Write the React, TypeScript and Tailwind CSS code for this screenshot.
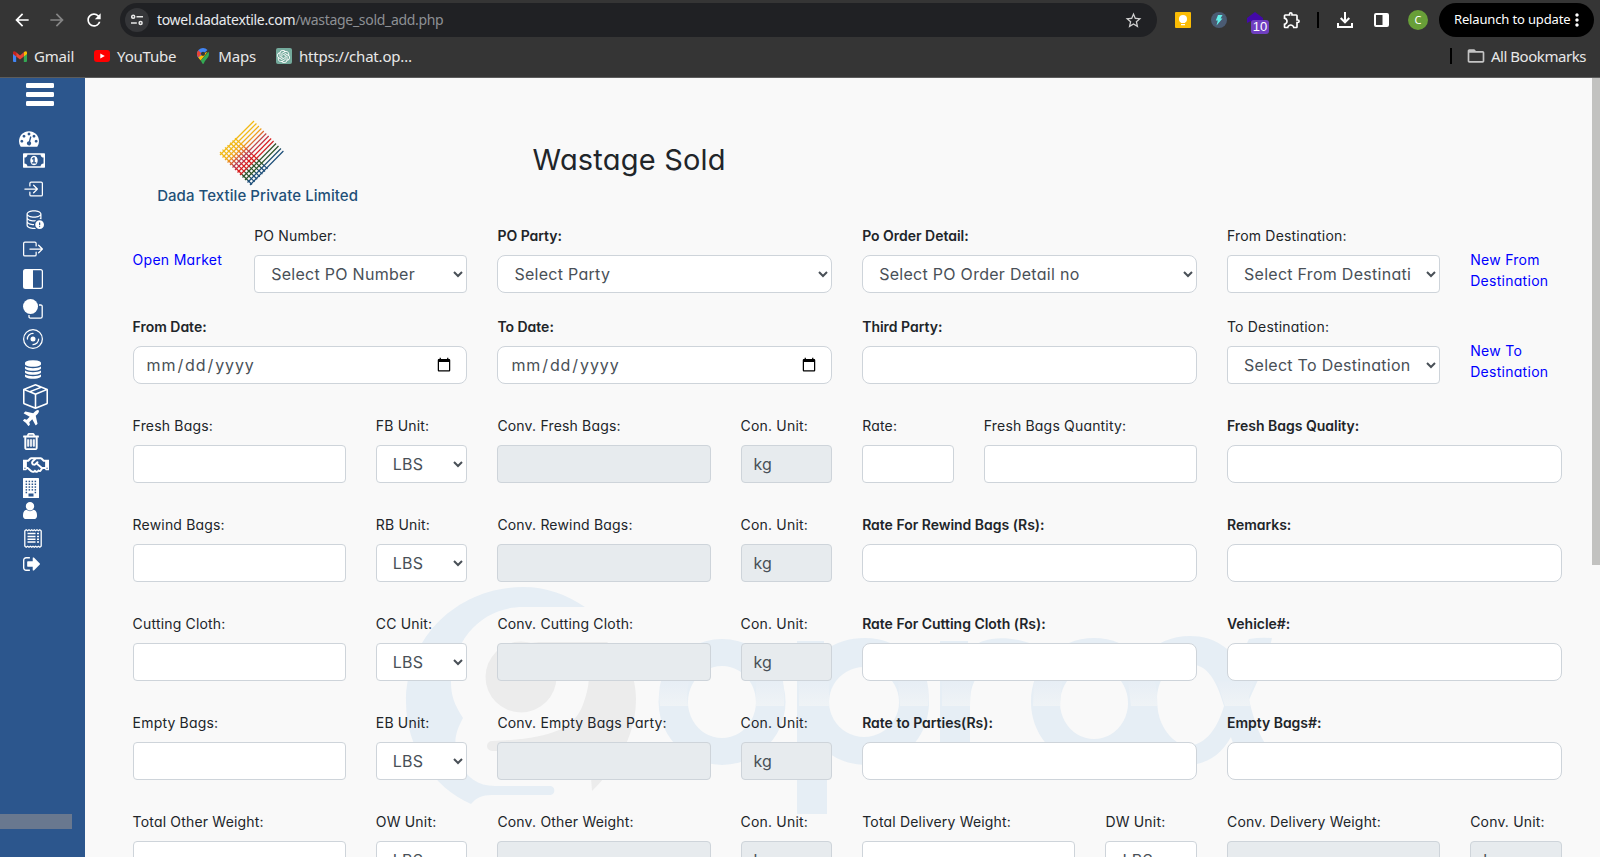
import React from "react";
import {
  MdArrowBack,
  MdArrowForward,
  MdRefresh,
  MdStarBorder,
  MdOutlineExtension,
  MdMoreVert,
  MdFolderOpen,
} from "react-icons/md";
import {
  BsBoxArrowInRight,
  BsBoxArrowRight,
  BsDatabaseExclamation,
  BsSquareHalf,
  BsDisc,
  BsBoxSeam,
} from "react-icons/bs";
import { FaRegHandshake } from "react-icons/fa";
import { SiOpenai } from "react-icons/si";

type Kind = "input" | "select" | "date" | "readonly" | "link";
interface Field {
  span: 1 | 2 | 3;
  label: string;
  kind: Kind;
  value?: string;
  bold?: boolean;
}

const SPAN = { 1: "col-span-1", 2: "col-span-2", 3: "col-span-3" } as const;

const input = (span: 1 | 2 | 3, label: string): Field => ({ span, label, kind: "input", bold: span === 3 });
const select = (span: 1 | 2 | 3, label: string, value: string): Field => ({
  span,
  label,
  kind: "select",
  value,
  bold: span === 3,
});
const date = (label: string): Field => ({ span: 3, label, kind: "date", bold: true });
const readonly = (span: 1 | 2 | 3, label: string, value = ""): Field => ({ span, label, kind: "readonly", value });
const link = (label: string): Field => ({ span: 1, label, kind: "link" });

const topRows: Field[][] = [
  [
    link("Open Market"),
    select(2, "PO Number:", "Select PO Number"),
    select(3, "PO Party:", "Select Party"),
    select(3, "Po Order Detail:", "Select PO Order Detail no"),
    select(2, "From Destination:", "Select From Destination"),
    link("New From Destination"),
  ],
  [
    date("From Date:"),
    date("To Date:"),
    input(3, "Third Party:"),
    select(2, "To Destination:", "Select To Destination"),
    link("New To Destination"),
  ],
];

const weightRow = (name: string, code: string, conv: string, rest: Field[]): Field[] => [
  input(2, name),
  select(1, code, "LBS"),
  readonly(2, conv),
  readonly(1, "Con. Unit:", "kg"),
  ...rest,
];

const weightRows: Field[][] = [
  weightRow("Fresh Bags:", "FB Unit:", "Conv. Fresh Bags:", [
    input(1, "Rate:"),
    input(2, "Fresh Bags Quantity:"),
    input(3, "Fresh Bags Quality:"),
  ]),
  weightRow("Rewind Bags:", "RB Unit:", "Conv. Rewind Bags:", [
    input(3, "Rate For Rewind Bags (Rs):"),
    input(3, "Remarks:"),
  ]),
  weightRow("Cutting Cloth:", "CC Unit:", "Conv. Cutting Cloth:", [
    input(3, "Rate For Cutting Cloth (Rs):"),
    input(3, "Vehicle#:"),
  ]),
  weightRow("Empty Bags:", "EB Unit:", "Conv. Empty Bags Party:", [
    input(3, "Rate to Parties(Rs):"),
    input(3, "Empty Bags#:"),
  ]),
  weightRow("Total Other Weight:", "OW Unit:", "Conv. Other Weight:", [
    input(2, "Total Delivery Weight:"),
    select(1, "DW Unit:", "LBS"),
    readonly(2, "Conv. Delivery Weight:"),
    readonly(1, "Conv. Unit:", "kg"),
  ]),
];

function FieldView({ field }: { field: Field }) {
  if (field.kind === "link") {
    return (
      <div className="col-span-1 pt-6">
        <a className="block w-[92px] text-sm leading-[21px] tracking-[0.28px] text-[#0000ff]">{field.label}</a>
      </div>
    );
  }
  const radius = field.span === 3 ? "rounded-lg" : "rounded";
  const box = `block h-[38px] w-full border border-[#ced4da] px-3 text-base text-[#495057] outline-none ${radius}`;
  return (
    <label className={`block min-w-0 ${SPAN[field.span]}`}>
      <span
        className={
          field.bold
            ? "mb-[9px] block h-[21px] whitespace-nowrap text-sm font-semibold leading-[21px] tracking-[-0.02px] text-[#212529]"
            : "mb-[9px] block h-[21px] whitespace-nowrap text-sm leading-[21px] tracking-[0.18px] text-[#212529]"
        }
      >
        {field.label}
      </span>
      {field.kind === "select" && (
        <select className={`${box} bg-white tracking-[0.28px]`}>
          <option>{field.value}</option>
        </select>
      )}
      {field.kind === "date" && <input type="date" className={`${box} bg-white tracking-[0.9px]`} />}
      {field.kind === "input" && <input type="text" className={`${box} bg-white`} />}
      {field.kind === "readonly" && (
        <input type="text" readOnly defaultValue={field.value} className={`${box} bg-[#e7ebee]`} />
      )}
    </label>
  );
}

function FormRow({ fields, height }: { fields: Field[]; height: string }) {
  return (
    <div className={`grid grid-cols-12 gap-x-[30px] ${height}`}>
      {fields.map((f, i) => (
        <FieldView key={i} field={f} />
      ))}
    </div>
  );
}

function Bookmark({ icon, text }: { icon: React.ReactNode; text: string }) {
  return (
    <div className="flex items-center gap-[7px] tracking-[-0.2px]">
      {icon}
      <span>{text}</span>
    </div>
  );
}

function BrowserChrome() {
  return (
    <header className="h-[78px] w-full shrink-0 border-b border-[#5c5c5c] bg-[#353535] font-['Noto_Sans',sans-serif] text-[#e8e8e8]">
      <div className="flex h-10 items-center pl-3 pr-[6px]">
        <MdArrowBack className="size-5 text-white" />
        <MdArrowForward className="ml-[15px] size-5 text-[#858585]" />
        <MdRefresh className="ml-[17px] size-5 text-white" />
        <div className="ml-[16px] flex h-[34px] w-[1037px] shrink-0 items-center rounded-full bg-[#202124] pl-[5px] pr-[14px]">
          <span className="flex size-6 items-center justify-center rounded-full bg-[#353639]">
            <svg className="size-3" viewBox="0 0 12 12" fill="none" stroke="#e8e8e8" strokeWidth="1.5">
              <circle cx="2.2" cy="2.8" r="1.5" />
              <path d="M5.5 2.8H12M0 9H5.8" />
              <circle cx="9.6" cy="9" r="1.5" />
            </svg>
          </span>
          <span className="ml-2 text-sm tracking-[-0.31px] text-[#e8eaed]">
            towel.dadatextile.com<span className="text-[#8d9094]">/wastage_sold_add.php</span>
          </span>
          <MdStarBorder className="ml-auto size-[19px] text-[#d0d0d0]" />
        </div>
        <svg className="ml-[18px] size-4" viewBox="0 0 16 16">
          <rect width="16" height="16" rx="1" fill="#fbbc04" />
          <circle cx="8" cy="7" r="4" fill="#fff" />
          <path d="M6 10h4v1H6zM6 12h4v1.2H6z" fill="#fff" />
        </svg>
        <svg className="ml-5 size-4" viewBox="0 0 16 16">
          <circle cx="8" cy="8" r="8" fill="#4a5b73" />
          <path d="M7 3h4.5L9.5 6.5h2L5.5 13.5l1.3-5H4.8z" fill="#63f0ea" />
        </svg>
        <div className="relative ml-5 h-4 w-[18px]">
          <svg className="size-4" viewBox="0 0 16 16">
            <path d="M8 0l8 6v6H4V9L0 11V6z" fill="#4309a8" />
          </svg>
          <span className="absolute left-1 top-2 flex h-[14px] w-[18px] items-center justify-center rounded-[3px] bg-[#6f3fc0] font-['Liberation_Sans',sans-serif] text-[13px] font-medium text-white">
            10
          </span>
        </div>
        <MdOutlineExtension className="ml-[17px] size-5 text-white" />
        <span className="ml-[15px] h-4 w-[2px] bg-black" />
        <svg className="ml-[18px] size-4" viewBox="0 0 16 16" fill="none" stroke="#fff" strokeWidth="2">
          <path d="M8 0v10M3.7 6L8 10.3 12.3 6M1 11v4h14v-4" />
        </svg>
        <svg className="ml-[21px] h-[14px] w-[15px]" viewBox="0 0 15 14">
          <rect x="1" y="1" width="13" height="12" rx="1" fill="none" stroke="#fff" strokeWidth="2" />
          <path d="M8.5 1H14v12H8.5z" fill="#fff" />
        </svg>
        <span className="ml-[19px] flex size-5 items-center justify-center rounded-full bg-[#689f38] text-[11px] text-white">
          C
        </span>
        <div className="ml-auto flex h-[34px] w-[155px] shrink-0 items-center whitespace-nowrap rounded-full bg-black pl-[15px] text-[13px] tracking-[-0.15px] text-white">
          <span className="w-[111px]">Relaunch to update</span>
          <MdMoreVert className="ml-[2px] size-5 shrink-0" />
        </div>
      </div>
      <div className="flex h-8 items-center gap-5 pl-3 pr-[14px] text-[15px]">
        <Bookmark
          text="Gmail"
          icon={
            <svg className="ml-px h-[11px] w-[14px]" viewBox="0 0 15 11" preserveAspectRatio="none">
              <path d="M0 2h3.4v9H1a1 1 0 0 1-1-1z" fill="#4285f4" />
              <path d="M11.6 2H15v8a1 1 0 0 1-1 1h-2.4z" fill="#34a853" />
              <path d="M11.6 1.3C13 0 15-.4 15 2v1l-3.4 2.5z" fill="#fbbc04" />
              <path d="M3.4 1.3L7.5 4.5l4.1-3.2v4.2L7.5 8.6 3.4 5.5z" fill="#ea4335" />
              <path d="M0 2C0-.4 2 0 3.4 1.3v4.2L0 3z" fill="#c5221f" />
            </svg>
          }
        />
        <Bookmark
          text="YouTube"
          icon={
            <svg className="h-3 w-4" viewBox="0 0 16 12">
              <rect width="16" height="12" rx="3" fill="#f00" />
              <path d="M6.3 3.4v5.2L10.8 6z" fill="#fff" />
            </svg>
          }
        />
        <Bookmark
          text="Maps"
          icon={
            <svg className="ml-px mr-[2px] h-4 w-[12px]" viewBox="0 0 12 16">
              <path d="M6 0a6 6 0 0 0-6 6c0 2 .7 3 1.500 4L10.500 2A6 6 0 0 0 6 0z" fill="#4285f4" />
              <path d="M1.300 2.300A6 6 0 0 0 1.300 9.500L4.500 5.500z" fill="#ea4335" />
              <path d="M1.300 9.500C2.300 11 3 11.500 3.700 12.600L10.500 4 7.500 5z" fill="#fbbc04" />
              <path
                d="M11.600 3.800L3.700 12.600C5 14.300 5 16 6 16s1-1.700 2.400-3.500C10 10.300 12 9 12 6q0-1.200-.4-2.200z"
                fill="#34a853"
              />
              <circle cx="6" cy="5.800" r="2.100" fill="#353535" />
            </svg>
          }
        />
        <Bookmark
          text="https://chat.op…"
          icon={
            <span className="flex size-4 items-center justify-center rounded-[2px] bg-[#74aa9c] text-white">
              <SiOpenai className="size-[13px]" />
            </span>
          }
        />
        <span className="ml-auto h-4 w-[2px] bg-black" />
        <div className="-ml-[6px] flex items-center gap-[5px] tracking-[-0.45px]">
          <MdFolderOpen className="size-5 text-[#c4c4c4]" />
          <span>All Bookmarks</span>
        </div>
      </div>
    </header>
  );
}

function Glyph({ d, box = "0 0 1792 1792", className }: { d: string; box?: string; className: string }) {
  return (
    <svg className={className} viewBox={box} fill="currentColor" preserveAspectRatio="xMidYMid meet">
      <path d={d} />
    </svg>
  );
}

const dashboardPath =
  "M384 1152q0-53-37.5-90.5t-90.5-37.5-90.5 37.5-37.5 90.5 37.500 90.500 90.500 37.500 90.500-37.500 37.500-90.500zm192-448q0-53-37.500-90.500t-90.500-37.500-90.500 37.500-37.500 90.500 37.500 90.500 90.500 37.500 90.500-37.500 37.500-90.500zm428 481l101-382q6-26-7.500-48.500t-38.500-29.500-48 6.500-30 39.500l-101 382q-60 5-107 43.500t-63 98.500q-20 77 20 146t117 89 146-20 89-117q16-60-6-117t-72-91zm660-33q0-53-37.500-90.500t-90.500-37.500-90.500 37.500-37.500 90.500 37.500 90.500 90.500 37.500 90.500-37.500 37.500-90.500zm-640-640q0-53-37.500-90.500t-90.500-37.500-90.500 37.500-37.500 90.500 37.500 90.500 90.500 37.500 90.500-37.500 37.500-90.500zm448 192q0-53-37.500-90.500t-90.500-37.500-90.500 37.500-37.500 90.500 37.500 90.500 90.500 37.500 90.500-37.500 37.500-90.500zm320 448q0 261-141 483-19 29-54 29h-1402q-35 0-54-29-141-221-141-483 0-182 71-348t191-286 286-191 348-71 348 71 286 191 191 286 71 348z";
const moneyPath =
  "M768 1152h384v-96h-128v-448h-114l-148 137 77 80q42-37 55-57h2v288h-128v96zm512-256q0 70-21 142t-59.500 134-101.500 101-138 39-138-39-101.500-101-59.500-134-21-142 21-142 59.500-134 101.500-101 138-39 138 39 101.500 101 59.500 134 21 142zm512 256v-512q-106 0-181-75t-75-181h-1152q0 106-75 181t-181 75v512q106 0 181 75t75 181h1152q0-106 75-181t181-75zm128-832v1152q0 26-19 45t-45 19h-1792q-26 0-45-19t-19-45v-1152q0-26 19-45t45-19h1792q26 0 45 19t19 45z";
const databasePath =
  "M896 768q237 0 443-43t325-127v170q0 69-103 128t-280 93.500-385 34.500-385-34.500-280-93.500-103-128v-170q119 84 325 127t443 43zm0 768q237 0 443-43t325-127v170q0 69-103 128t-280 93.500-385 34.500-385-34.500-280-93.500-103-128v-170q119 84 325 127t443 43zm0-384q237 0 443-43t325-127v170q0 69-103 128t-280 93.500-385 34.500-385-34.500-280-93.500-103-128v-170q119 84 325 127t443 43zm0-1152q208 0 385 34.500t280 93.500 103 128v128q0 69-103 128t-280 93.500-385 34.500-385-34.500-280-93.500-103-128v-128q0-69 103-128t280-93.500 385-34.500z";
const planePath =
  "M1568 160q44 52 12 148t-108 172l-161 161 160 696q5 19-12 33l-128 96q-7 6-19 6-4 0-7-1-15-3-21-16l-279-508-259 259 53 194q5 17-8 31l-96 96q-9 9-23 9h-2q-15-2-24-13l-189-252-252-189q-11-7-13-23-1-13 9-25l96-97q9-9 23-9 6 0 8 1l194 53 259-259-508-279q-14-8-17-24-2-16 9-27l128-128q14-13 30-8l665 159 160-160q76-76 172-108t148 12z";
const trashPath =
  "M704 736v576q0 14-9 23t-23 9h-64q-14 0-23-9t-9-23v-576q0-14 9-23t23-9h64q14 0 23 9t9 23zm256 0v576q0 14-9 23t-23 9h-64q-14 0-23-9t-9-23v-576q0-14 9-23t23-9h64q14 0 23 9t9 23zm256 0v576q0 14-9 23t-23 9h-64q-14 0-23-9t-9-23v-576q0-14 9-23t23-9h64q14 0 23 9t9 23zm128 724v-948h-896v948q0 22 7 40.500t14.500 27 10.500 8.500h832q3 0 10.500-8.500t14.500-27 7-40.500zm-672-1076h448l-48-117q-7-9-17-11h-317q-10 2-17 11zm928 32v64q0 14-9 23t-23 9h-96v948q0 83-47 143.500t-113 60.500h-832q-66 0-113-58.500t-47-141.500v-952h-96q-14 0-23-9t-9-23v-64q0-14 9-23t23-9h309l70-167q15-37 54-63t79-26h320q40 0 79 26t54 63l70 167h309q14 0 23 9t9 23z";
const userPath =
  "M1536 1399q0 109-62.500 187t-150.500 78h-854q-88 0-150.500-78t-62.500-187q0-85 8.500-160.500t31.500-152 58.500-131 94-89 134.500-34.500q131 128 313 128t313-128q76 0 134.500 34.500t94 89 58.500 131 31.500 152 8.500 160.500zm-256-887q0 159-112.500 271.500t-271.500 112.500-271.500-112.500-112.500-271.500 112.500-271.500 271.500-112.500 271.500 112.500 112.500 271.500z";
const signOutPath =
  "M704 1440q0 4 1 20t.5 26.500-3 23.500-10 19.500-20.500 6.500h-320q-119 0-203.500-84.500t-84.500-203.500v-704q0-119 84.500-203.500t203.500-84.500h320q13 0 22.500 9.500t9.500 22.500q0 4 1 20t.5 26.500-3 23.500-10 19.500-20.500 6.500h-320q-66 0-113 47t-47 113v704q0 66 47 113t113 47h312l11.500 1 11.500 3 8 5.500 7 9 2 13.500zm928-544q0 26-19 45l-544 544q-19 19-45 19t-45-19-19-45v-288h-448q-26 0-45-19t-19-45v-384q0-26 19-45t45-19h448v-288q0-26 19-45t45-19 45 19l544 544q19 19 19 45z";

function BuildingIcon() {
  return (
    <svg className="h-5 w-4" viewBox="0 0 16 20">
      <rect width="16" height="20" rx=".6" fill="#fff" />
      {[2.7, 5.5, 8.3, 11.1].map((y) =>
        [3, 6, 9, 12].map((x) => <rect key={`${x}-${y}`} x={x - 0.4} y={y} width="1.5" height="1.5" fill="#2c568d" />)
      )}
      <path d="M2.6 13.8h1.5v1.5H2.600zM11.600 13.800h1.500v1.500h-1.500zM5.500 15.500h5V18.500h-5z" fill="#2c568d" />
    </svg>
  );
}

function ReceiptIcon() {
  return (
    <svg className="ml-px mt-[10px] h-[19px] w-[18px]" viewBox="0 0 18 19" fill="none" stroke="#fff">
      <path d="M.8 1.5v16M17.2 1.5v16" strokeWidth="1.3" />
      <path
        d="M.8 1.8l1.4-1 1.4 1 1.4-1 1.4 1 1.3-1 1.3 1 1.3-1 1.3 1 1.4-1 1.4 1 1.4-1 1.4 1M.8 17.200l1.400 1 1.400-1 1.400 1 1.400-1 1.300 1 1.300-1 1.300 1 1.300-1 1.400 1 1.400-1 1.400 1 1.400-1"
        strokeWidth="1.1"
      />
      <path d="M3.500 4.600h8M3.500 7.400h8M3.500 10.200h8M3.500 13h8M13 4.600h2M13 7.400h2M13 10.200h2M13 13h2" strokeWidth="1.5" />
    </svg>
  );
}

function Sidebar() {
  return (
    <nav className="flex w-[85px] shrink-0 flex-col bg-[#2c568d] text-white">
      <svg className="ml-[26px] mt-[5px] h-[23px] w-7" viewBox="0 0 28 23" fill="currentColor">
        <rect width="28" height="5" rx="1.3" />
        <rect y="9" width="28" height="5" rx="1.3" />
        <rect y="18" width="28" height="5" rx="1.3" />
      </svg>
      <Glyph d={dashboardPath} box="0 256 1792 1408" className="ml-[19px] mt-[25px] h-4 w-5" />
      <div className="flex flex-col items-start pl-[23px]">
        <Glyph d={moneyPath} box="0 256 1920 1280" className="mt-[6px] h-[15px] w-[22px]" />
        <BsBoxArrowInRight className="mt-[11px] size-5" />
        <BsDatabaseExclamation className="ml-px mt-[10px] size-5" />
        <BsBoxArrowRight className="mt-[10px] size-5" />
        <BsSquareHalf className="mt-[10px] size-5" />
        <svg className="mt-[10px] size-5" viewBox="0 0 20 20">
          <path
            d="M6 16v1.500A1.500 1.500 0 0 0 7.500 19.200h10a1.700 1.700 0 0 0 1.700-1.700v-10A1.500 1.500 0 0 0 17.500 6H16"
            fill="none"
            stroke="#fff"
            strokeWidth="1.3"
          />
          <circle cx="7.5" cy="7.5" r="7.5" fill="#fff" />
        </svg>
        <BsDisc className="mt-[10px] size-5" />
        <Glyph d={databasePath} box="128 0 1536 1792" className="ml-[2px] mt-[11px] h-[19px] w-4" />
        <BsBoxSeam className="mt-[5px] size-[25px]" />
        <Glyph d={planePath} box="192 128 1408 1408" className="mt-px size-4" />
        <Glyph d={trashPath} box="192 128 1408 1536" className="mt-[7px] h-[17px] w-4 stroke-current [stroke-width:50]" />
        <FaRegHandshake className="mt-[2px] h-[26px] w-[26px]" />
        <BuildingIcon />
        <Glyph d={userPath} box="256 128 1280 1536" className="mt-[4px] h-[17px] w-[14px]" />
        <ReceiptIcon />
        <Glyph d={signOutPath} box="64 256 1568 1280" className="mt-[9px] h-[14px] w-[17px]" />
      </div>
      <div className="mb-[28px] mt-auto h-[15px] w-[72px] bg-[#69788f]" />
    </nav>
  );
}

function WeaveLogo() {
  return (
    <svg className="h-[66px] w-[66px]" viewBox="219 119 66 66" fill="none">
      <defs>
        <linearGradient id="weave" gradientUnits="userSpaceOnUse" x1="237" y1="135" x2="268" y2="167">
          <stop offset="0.1" stopColor="#f2b916" />
          <stop offset="0.25" stopColor="#f0a51c" />
          <stop offset="0.33" stopColor="#e0692a" />
          <stop offset="0.45" stopColor="#b63a50" />
          <stop offset="0.57" stopColor="#dc1c1c" />
          <stop offset="0.68" stopColor="#c82020" />
          <stop offset="0.72" stopColor="#2c5228" />
          <stop offset="0.84" stopColor="#2c5228" />
          <stop offset="0.9" stopColor="#1b4c77" />
        </linearGradient>
      </defs>
      <g stroke="url(#weave)" strokeWidth="1.2">
        {Array.from({ length: 13 }, (_, i) => (
          <path key={i} d={`M${220 + i * 2.5} ${154 + i * 2.5}L${254 + i * 2.45} ${120 + i * 2.5}`} />
        ))}
        {Array.from({ length: 7 }, (_, i) => (
          <path key={`c${i}`} d={`M${220 + i * 2.5} ${151 - i * 2.3}L${252 + i * 2.6} ${183.5 - i * 2.6}`} />
        ))}
      </g>
    </svg>
  );
}

function Watermark() {
  return (
    <svg
      className="pointer-events-none absolute left-[315px] top-[502px] h-[240px] w-[880px]"
      viewBox="400 580 880 240"
      fill="#e6eef5"
    >
      <defs>
        <linearGradient id="sheen" x1="0" y1="0" x2="0" y2="1">
          <stop offset="0" stopColor="#e7eef5" />
          <stop offset="1" stopColor="#eff3f6" />
        </linearGradient>
      </defs>
      <path d="M585 607C566 594 546 587 523 587C458 587 406 637 406 702C406 748 434 788 471 804C476 798 482 795 492 795H551A4.700 4.700 0 0 0 551 786H495C478 786 466 777 460 763C453 744 454 735 463 718C454 704 451 695 451 682C453 638 483 607 523 607Z" />
      <g fill="#ececec">
        <circle cx="521" cy="677" r="35.5" />
        <path d="M521 642H607C627 656 636 676 636 699C636 736 617 766 592 791L590 764C578 757 555 751 492 751A5 5 0 0 1 492 741C548 739 572 730 582 707C590 687 591 672 584 662C574 650 550 642 521 642Z" />
      </g>
      <path fillRule="evenodd" d="M722 639A63.500 63 0 1 0 722.100 639ZM722 666A34 36 0 1 1 721.900 666Z" />
      <path
        fillRule="evenodd"
        d="M797 641H824V651C836 642 849 638 865 638C901 638 929 666 929 702C929 738 902 765 868 765C851 765 838 760 827 752V814H797ZM864 667A35 35 0 1 0 864.100 667Z"
      />
      <path d="M940 641H968V650C982 637 1006 634 1035 645L1025 670C990 660 971 670 970 702V762H940Z" />
      <path
        fillRule="evenodd"
        d="M1094 638C1130 638 1157 666 1157 700C1157 720 1166 737 1182 745L1170 762C1152 763 1138 756 1132 748C1122 759 1110 765 1094 765C1058 765 1031 737 1031 702C1031 666 1058 638 1094 638ZM1094 667A34 36 0 1 0 1094.100 667Z"
      />
      <path
        fillRule="evenodd"
        d="M1128 702C1128 665 1153 636 1190 636C1215 636 1231 649 1241 666C1244 655 1245 646 1249 639Q1260 637 1272 638C1266 665 1257 682 1249 700C1255 724 1261 741 1274 756L1244 758C1238 752 1233 745 1231 737C1221 755 1206 765 1187 765C1151 765 1128 738 1128 702ZM1157 700C1157 728 1168 746 1186 746C1207 746 1218 726 1224 706C1215 675 1205 664 1188 664C1168 664 1157 680 1157 700Z"
      />
      <path
        fill="url(#sheen)"
        d="M661 681H689Q686 692 688 706H660Q658 690 661 681ZM756 681H783Q785 694 784 706H756ZM799 681H829V706H799ZM898 681H927Q930 694 928 706H900ZM942 681H971L970 706H942ZM1034 681H1062L1060 706H1033ZM1128 681H1155Q1158 694 1157 706H1131ZM1217 681H1255L1249 696 1250 706H1225Z"
      />
    </svg>
  );
}

export default function App() {
  return (
    <div className="flex h-[857px] w-full flex-col overflow-hidden bg-[#f9f9f9]">
      <BrowserChrome />
      <div className="flex min-h-0 flex-1">
        <Sidebar />
        <main className="relative min-w-0 flex-1 overflow-hidden bg-[#f9f9f9] font-['Inter',sans-serif] [font-feature-settings:'cv11']">
          <Watermark />
          <div className="relative w-[1476.800px] pl-[47.600px]">
            <div className="flex h-[147px] items-start">
              <div className="ml-[24px] mt-[42px] flex w-[202px] flex-col items-center">
                <div className="-ml-[12px]">
                  <WeaveLogo />
                </div>
                <span className="mt-px whitespace-nowrap text-[15px] font-medium leading-[18px] tracking-[0.07px] text-[#1f5078] [font-feature-settings:normal]">
                  Dada Textile Private Limited
                </span>
              </div>
              <h1 className="ml-[174px] mt-[65px] whitespace-nowrap text-[29px] leading-[34px] tracking-[0.2px] text-[#212529]">
                Wastage Sold
              </h1>
            </div>
            <FormRow fields={topRows[0]} height="h-[91px]" />
            <FormRow fields={topRows[1]} height="h-[99px]" />
            {weightRows.map((r, i) => (
              <FormRow key={i} fields={r} height="h-[99px]" />
            ))}
          </div>
        </main>
        <div className="w-2 shrink-0 bg-[#f9f9f9]">
          <div className="h-[487px] bg-[#c2c2c0]" />
        </div>
      </div>
    </div>
  );
}
